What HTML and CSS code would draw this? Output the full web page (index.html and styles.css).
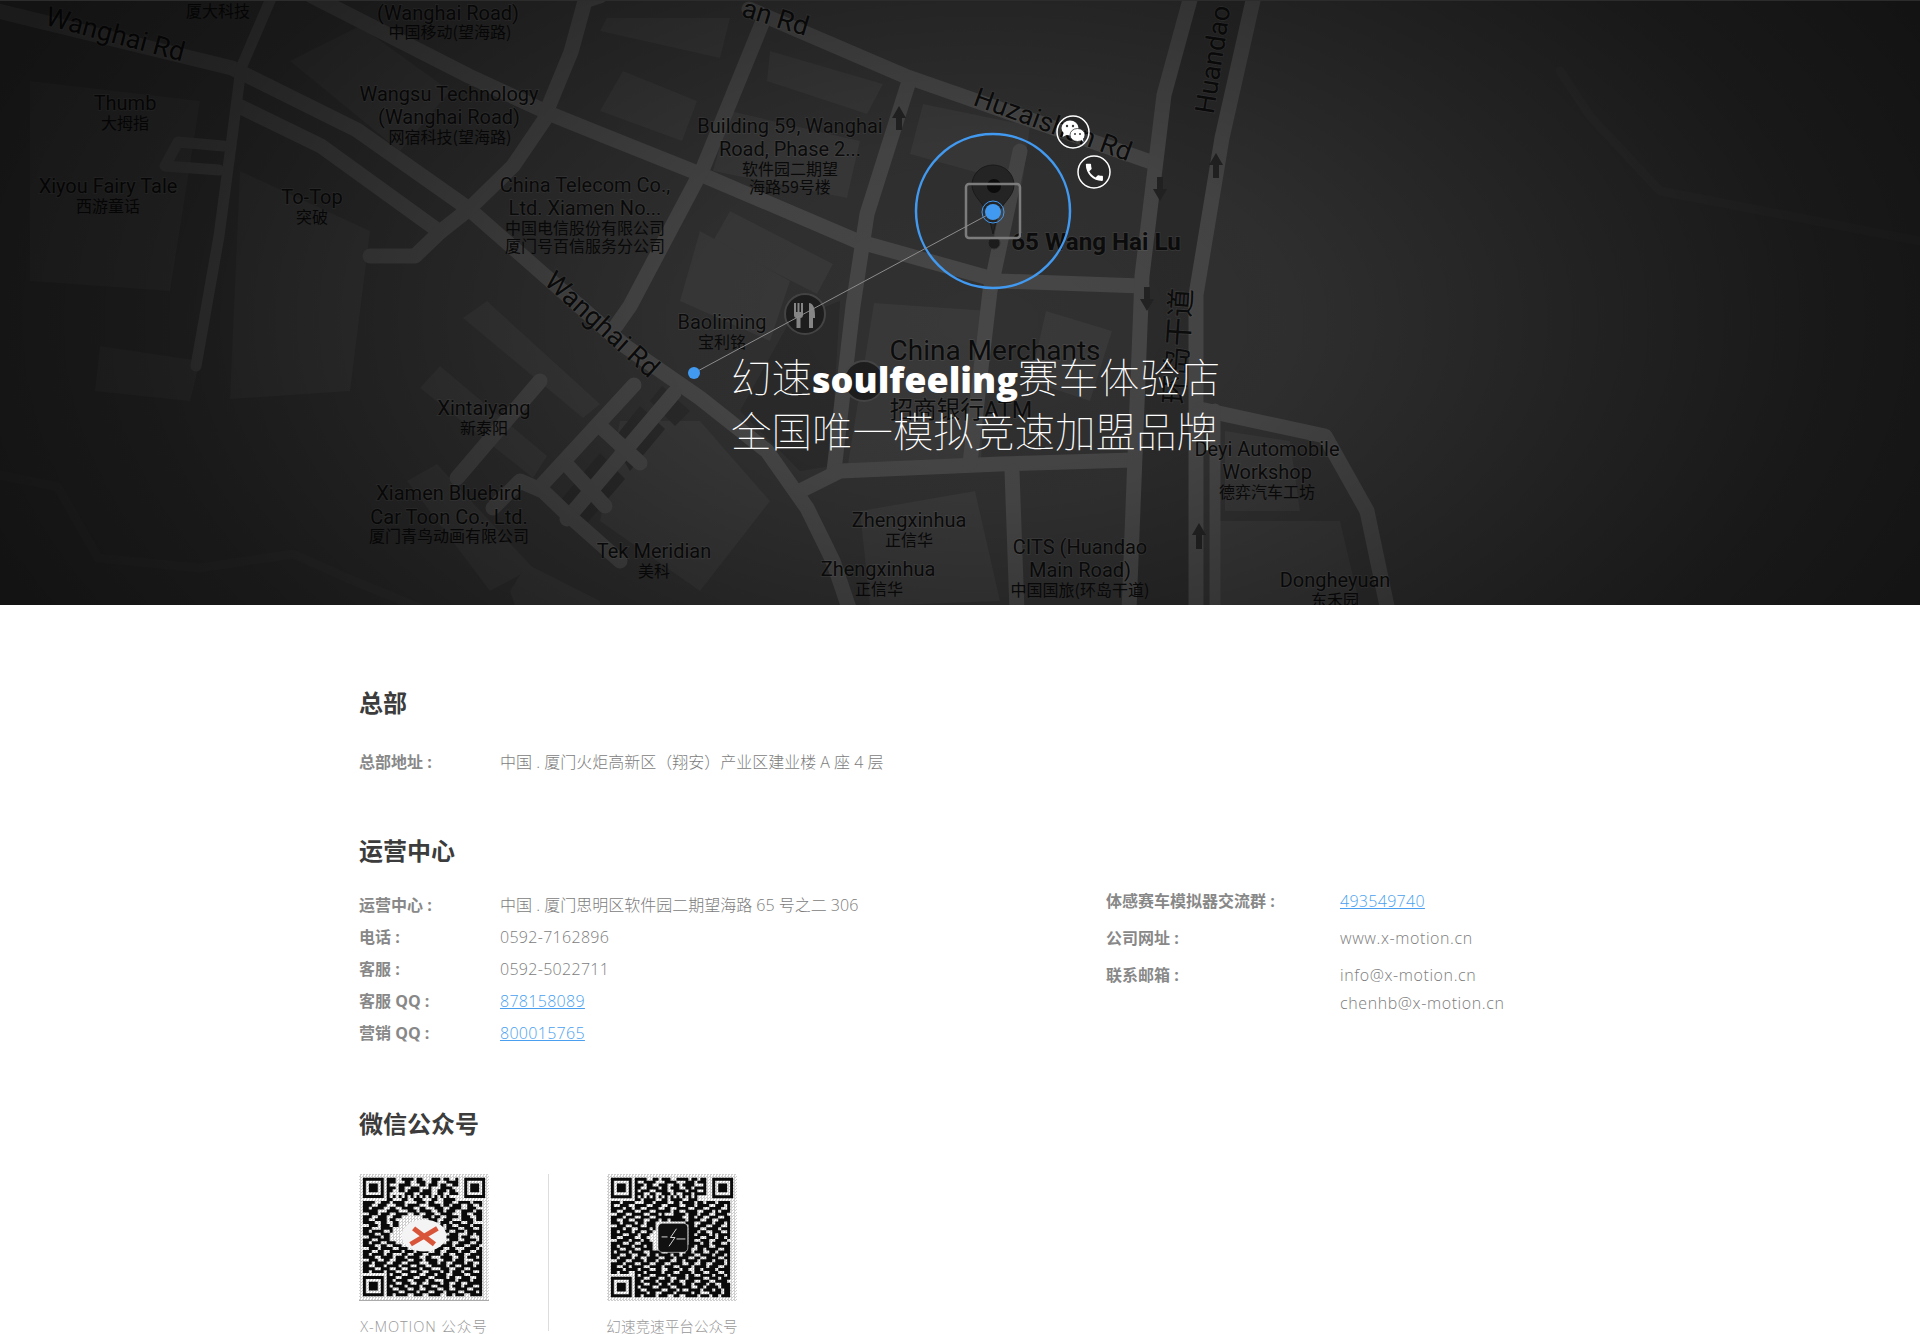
FILE: index.html
```html
<!DOCTYPE html>
<html lang="zh-CN">
<head>
  <meta charset="UTF-8" />
  <meta name="viewport" content="width=device-width, initial-scale=1" />
  <title>联系我们 - X-MOTION</title>
  <link rel="stylesheet" href="styles.css">
</head>
<body>
  <section class="hero">
    <svg class="map" viewBox="0 0 1920 605" width="1920" height="605" aria-hidden="true">
      <rect class="ground" width="1920" height="605"/>

      <!-- blocks -->
      <g class="block">
        <polygon points="770,50 883,83 867,113 767,80"/>
        <polygon points="730,110 860,140 847,197 713,170"/>
        <polygon points="713,240 730,210 833,263 817,293"/>
        <polygon points="623,70 697,100 682,140 600,110"/>
        <polygon points="607,17 730,17 720,57 600,30"/>
        <polygon points="923,103 1030,125 1022,184 910,153"/>
        <polygon points="874,302 990,310 981,459 848,463"/>
        <polygon points="1046,310 1112,330 1090,400 1030,380"/>
        <polygon points="290,60 360,25 450,90 400,150"/>
        <polygon points="463,317 487,300 600,403 583,417"/>
        <polygon points="420,387 440,365 547,455 533,477"/>
        <polygon points="407,480 437,463 533,567 490,590"/>
        <polygon points="510,590 527,563 600,600 600,605 515,605"/>
        <polygon points="620,420 700,420 770,500 700,590 600,520"/>
        <polygon points="860,510 975,490 1000,600 870,605"/>
        <polygon points="1215,520 1340,520 1360,605 1215,605"/>
        <polygon points="1225,430 1290,440 1300,510 1225,510"/>
        <polygon points="240,170 370,230 350,390 230,398"/>
        <polygon points="30,80 200,100 170,290 30,280"/>
        <polygon points="100,345 200,360 190,400 95,390"/>
        <polygon points="700,230 790,280 770,340 680,300"/>
      </g>
      <g class="block-dark">
        <polygon points="650,400 662,385 690,410 675,425"/>
        <polygon points="612,440 640,405 665,428 630,470"/>
        <polygon points="560,500 600,452 625,478 582,528"/>
        <polygon points="790,320 840,300 830,465 800,470 740,410"/>
        <polygon points="1142,0 1191,0 1164,94 1140,280 1128,605 1196,605 1196,294 1222,137 1254,0"/>
      </g>

      <!-- river, very faint -->
      <polyline class="road-faint" points="0,474 58,486 98,557 200,567 293,553 347,577 427,610"/>
      <polyline class="road-faint" points="1560,70 1590,115 1660,190 1920,240"/>

      <!-- roads -->
      <g class="road">
        <polyline points="-10,8 232,67 357,129 469,208 625,345 700,397 767,450 807,507 833,560 850,610"/>
        <polyline points="241,106 321,145 440,231"/>
        <polyline points="545,118 513,165 469,208 440,231 415,255 370,255"/>
        <polyline points="312,-5 469,75 553,114 600,133 700,173 857,240 1000,280 1142,285"/>
        <polyline points="749,8 905,75 1151,161"/>
        <polyline points="600,-5 585,0 571,51 545,114"/>
        <polyline points="763,20 703,167 630,305 616,325"/>
        <polyline points="910,77 867,213 853,305 834,470"/>
        <polyline points="800,490 840,470 1000,463 1133,459"/>
        <polyline points="1012,470 1017,610"/>
        <polyline points="1191,-5 1164,94 1142,275 1129,610"/>
        <polyline points="1254,-5 1222,137 1196,294 1196,610"/>
        <polyline points="1200,408 1325,435 1367,510 1388,610"/>
        <polyline points="634,384 540,486"/>
        <polyline points="674,392 567,518"/>
        <polyline points="600,425 640,462"/>
        <polyline points="568,465 605,505"/>
        <polyline points="493,507 520,480 543,490 567,513 620,560"/>
        <polyline points="540,380 457,477"/>
        <polyline points="1020,150 990,290 970,462"/>
      </g>
      <g class="road-thin">
        <polyline points="272,-5 241,67 232,137 219,235 196,365"/>
        <polyline points="223,145 178,141 165,165 219,169"/>
        <polyline points="1215,408 1215,605"/>
      </g>

      <!-- one way arrows -->
      <g class="arrow">
        <path d="M899 105l7 12h-4v12h-6v-12h-4z"/>
        <path d="M1216 152l7 12h-4v13h-6v-13h-4z"/>
        <path d="M1199 522l7 12h-4v14h-6v-14h-4z"/>
        <path d="M1160 200l7-12h-4v-12h-6v12h-4z"/>
        <path d="M1147 310l7-12h-4v-12h-6v12h-4z"/>
      </g>

      <!-- restaurant and atm pois -->
      <circle class="poi" cx="805" cy="313" r="20"/>
      <path class="poi-mark" d="M794 302h2v9h1.500v-9h2v9h1.500v-9h2v12c0 2-1 3-2.500 3v10h-4v-10c-1.500 0-2.500-1-2.500-3zM809 302c4 0 6 5 6 13v2h-2v10h-4z"/>
      <circle class="poi" cx="864" cy="380" r="20"/>

      <!-- place labels -->
      <g class="lbl">
        <text x="448" y="19">(Wanghai Road)</text>
        <text x="449" y="100">Wangsu Technology</text>
        <text x="449" y="123">(Wanghai Road)</text>
        <text x="125" y="109">Thumb</text>
        <text x="108" y="192">Xiyou Fairy Tale</text>
        <text x="312" y="203">To-Top</text>
        <text x="585" y="191">China Telecom Co.,</text>
        <text x="585" y="214">Ltd. Xiamen No...</text>
        <text x="790" y="132">Building 59, Wanghai</text>
        <text x="790" y="155">Road, Phase 2...</text>
        <text x="722" y="328">Baoliming</text>
        <text x="484" y="414">Xintaiyang</text>
        <text x="449" y="499">Xiamen Bluebird</text>
        <text x="449" y="523">Car Toon Co., Ltd.</text>
        <text x="654" y="557">Tek Meridian</text>
        <text x="909" y="526">Zhengxinhua</text>
        <text x="878" y="575">Zhengxinhua</text>
        <text x="1080" y="553">CITS (Huandao</text>
        <text x="1080" y="576">Main Road)</text>
        <text x="1267" y="455">Deyi Automobile</text>
        <text x="1267" y="478">Workshop</text>
        <text x="1335" y="586">Dongheyuan</text>
      </g>
      <g class="lbl-turn">
        <text transform="translate(113 42) rotate(15)">Wanghai Rd</text>
        <text transform="translate(596 330) rotate(42)">Wanghai Rd</text>
        <text transform="translate(1050 132) rotate(20)">Huzaishan Rd</text>
        <text transform="translate(773 25) rotate(17)">an Rd</text>
        <text transform="translate(1222 60) rotate(-81)">Huandao</text>
      </g>
      <g class="lbl-zh">
        <text x="218" y="16">厦大科技</text>
        <text x="450" y="37">中国移动(望海路)</text>
        <text x="450" y="142">网宿科技(望海路)</text>
        <text x="125" y="128">大拇指</text>
        <text x="108" y="211">西游童话</text>
        <text x="312" y="222">突破</text>
        <text x="585" y="233">中国电信股份有限公司</text>
        <text x="585" y="251">厦门号百信服务分公司</text>
        <text x="790" y="174">软件园二期望</text>
        <text x="790" y="192">海路59号楼</text>
        <text x="722" y="347">宝利铭</text>
        <text x="484" y="433">新泰阳</text>
        <text x="449" y="541">厦门青鸟动画有限公司</text>
        <text x="654" y="576">美科</text>
        <text x="909" y="545">正信华</text>
        <text x="879" y="594">正信华</text>
        <text x="1080" y="595">中国国旅(环岛干道)</text>
        <text x="1267" y="497">德弈汽车工坊</text>
        <text x="1335" y="605">东禾园</text>
      </g>
      <text class="lbl-big" x="995" y="359">China Merchants</text>
      <text class="lbl-atm" x="961" y="417">招商银行ATM</text>
      <text class="lbl-road" transform="translate(1188 346) rotate(-86)">环岛干道</text>
      <text class="lbl-bold" x="1096" y="249">65 Wang Hai Lu</text>
    </svg>
    <div class="vignette"></div>

    <svg class="marker" viewBox="0 0 1920 605" width="1920" height="605" aria-hidden="true">
      <path class="pin" d="M993 164c-12 0-21 9-21 20 0 12 13 18 17 32l4 17 4-17c4-14 17-20 17-32 0-11-9-20-21-20z"/>
      <circle class="pin-hole" cx="994" cy="185" r="7"/>
      <circle class="pin-foot" cx="994" cy="242" r="6"/>
      <rect class="pin-box" x="966" y="183" width="54" height="54" rx="3"/>
      <circle class="ring" cx="993" cy="210" r="77"/>
      <line class="lead" x1="993" y1="211" x2="694" y2="372"/>
      <circle class="dot" cx="993" cy="211" r="8"/>
      <circle class="dot-ring" cx="993" cy="211" r="11"/>
      <circle class="dot" cx="694" cy="372" r="6"/>

      <circle class="icon-ring" cx="1073" cy="131" r="16"/>
      <g class="icon-wx">
        <ellipse cx="1070" cy="127" rx="8.500" ry="7.500"/>
        <path d="M1064 131l-1.500 5 5-2.500z"/>
        <ellipse class="wx-back" cx="1077.500" cy="134" rx="7.500" ry="6.500"/>
        <path d="M1081 138l2.500 3.500-.5-5z"/>
      </g>
      <g class="wx-eyes">
        <circle cx="1067" cy="125" r="1.200"/>
        <circle cx="1073" cy="125" r="1.200"/>
        <circle cx="1075" cy="133" r="1"/>
        <circle cx="1080" cy="133" r="1"/>
      </g>
      <circle class="icon-ring" cx="1094" cy="171" r="16"/>
      <path class="icon-phone" transform="translate(1083 160) scale(.95)" d="M6.620 10.790c1.440 2.830 3.760 5.140 6.590 6.590l2.200-2.200c.27-.27.67-.36 1.020-.24 1.120.37 2.330.57 3.570.57.55 0 1 .45 1 1V20c0 .55-.45 1-1 1-9.390 0-17-7.610-17-17 0-.55.45-1 1-1h3.500c.55 0 1 .45 1 1 0 1.250.2 2.450.57 3.570.11.35.03.74-.25 1.020l-2.200 2.200z"/>
    </svg>

    <h1 class="hero-title">幻速<b>soulfeeling</b>赛车体验店<br>全国唯一模拟竞速加盟品牌</h1>
  </section>

  <main class="content">
    <h2>总部</h2>
    <dl class="info info-hq">
      <div><dt>总部地址 :</dt><dd>中国 . 厦门火炬高新区（翔安）产业区建业楼 A 座 4 层</dd></div>
    </dl>

    <h2>运营中心</h2>
    <div class="contact-cols">
      <dl class="info">
        <div><dt>运营中心 :</dt><dd>中国 . 厦门思明区软件园二期望海路 65 号之二 306</dd></div>
        <div><dt>电话 :</dt><dd class="latin">0592-7162896</dd></div>
        <div><dt>客服 :</dt><dd class="latin">0592-5022711</dd></div>
        <div><dt>客服 QQ :</dt><dd class="latin"><a href="#">878158089</a></dd></div>
        <div><dt>营销 QQ :</dt><dd class="latin"><a href="#">800015765</a></dd></div>
      </dl>
      <dl class="info info-side">
        <div><dt>体感赛车模拟器交流群 :</dt><dd class="latin"><a href="#">493549740</a></dd></div>
        <div><dt>公司网址 :</dt><dd class="latin latin-wide">www.x-motion.cn</dd></div>
        <div><dt>联系邮箱 :</dt><dd class="latin latin-wide">info@x-motion.cn<br>chenhb@x-motion.cn</dd></div>
      </dl>
    </div>

    <h2>微信公众号</h2>
    <div class="qr-list">
      <figure class="qr-item">
        <svg class="qr qr-first" id="qrXmotion" viewBox="-1.300 -1.300 43.600 43.600" preserveAspectRatio="none" aria-hidden="true"></svg>
        <figcaption class="cap-latin">X-MOTION 公众号</figcaption>
      </figure>
      <figure class="qr-item">
        <svg class="qr" id="qrSoul" viewBox="-1.300 -1.300 43.600 43.600" preserveAspectRatio="none" aria-hidden="true"></svg>
        <figcaption>幻速竞速平台公众号</figcaption>
      </figure>
    </div>
  </main>

  <script src="qr.js"></script>
</body>
</html>
```

FILE: styles.css
```css
* {
  margin: 0;
  padding: 0;
  box-sizing: border-box;
}

html, body {
  height: 100%;
  overflow: hidden;
  background: #fff;
  font-family: "Open Sans", "Noto Sans CJK SC", sans-serif;
  color: #888;
}

.hero {
  position: relative;
  height: 605px;
  overflow: hidden;
  background: #141414;
  border-top: 1px solid #2c2c2c;
}

.map, .marker {
  position: absolute;
  top: 0;
  left: 0;
  display: block;
}

.ground { fill: #313131; }
.block polygon { fill: #393939; }
.block-dark polygon { fill: #2b2b2b; }

.road polyline, .road-thin polyline, .road-faint {
  fill: none;
  stroke-linejoin: round;
  stroke-linecap: round;
}

.road polyline { stroke: #474747; stroke-width: 15px; }
.road-thin polyline { stroke: #474747; stroke-width: 11px; }
.road-faint { stroke: #353535; stroke-width: 9px; }

.arrow path { fill: #232323; }

.poi { fill: #1e1e1e; stroke: #464646; stroke-width: 2px; }
.poi-mark { fill: #8a8a8a; }

.map text {
  text-anchor: middle;
  fill: #0c0c0c;
  paint-order: stroke;
  stroke: rgba(255, 255, 255, 0.06);
  stroke-width: 2px;
}

.lbl text {
  font-family: Roboto, sans-serif;
  font-size: 20px;
}

.lbl-turn text {
  font-family: Roboto, sans-serif;
  font-size: 27px;
}

.map .lbl-zh text {
  font-family: "Noto Sans CJK SC", sans-serif;
  font-size: 16px;
  fill: #0a0a0a;
  stroke: none;
}

.lbl-big {
  font-family: Roboto, sans-serif;
  font-size: 28px;
}

.lbl-atm {
  font-family: Roboto, "Noto Sans CJK SC", sans-serif;
  font-size: 23.500px;
}

.lbl-road {
  font-family: "Noto Sans CJK SC", sans-serif;
  font-size: 29px;
}

.lbl-bold {
  font-family: Roboto, sans-serif;
  font-size: 24.200px;
  font-weight: 700;
}

.vignette {
  position: absolute;
  inset: 0;
  background: radial-gradient(ellipse 1080px 640px at 985px 320px,
    rgba(0, 0, 0, 0) 0%,
    rgba(0, 0, 0, 0.06) 28%,
    rgba(0, 0, 0, 0.3) 55%,
    rgba(0, 0, 0, 0.5) 78%,
    rgba(0, 0, 0, 0.62) 100%);
}

.pin { fill: #242424; stroke: #1a1a1a; }
.pin-hole { fill: #0c0c0c; }
.pin-foot { fill: #1c1c1c; stroke: #333; }
.pin-box { fill: none; stroke: #7c7c7c; stroke-width: 2.500px; }
.ring { fill: none; stroke: #4299f0; stroke-width: 2.500px; }
.lead { stroke: #8c8c8c; stroke-width: 1px; }
.dot { fill: #4299f0; }
.dot-ring { fill: none; stroke: #4299f0; stroke-width: 1px; }
.icon-ring { fill: rgba(0, 0, 0, 0.12); stroke: #fff; stroke-width: 1.500px; }
.icon-wx { fill: #fff; }
.wx-back { stroke: #333; stroke-width: 0.800px; }
.wx-eyes circle { fill: #3a3a3a; }
.icon-phone { fill: #fff; }

.hero-title {
  position: absolute;
  left: 731px;
  top: 348px;
  font-family: "Noto Sans CJK SC", sans-serif;
  font-size: 40.500px;
  font-weight: 100;
  line-height: 54px;
  color: #fff;
  white-space: nowrap;
}

.hero-title b {
  font-family: "Open Sans", sans-serif;
  font-weight: 800;
  font-size: 36px;
  line-height: 0;
}

.content {
  width: 1202px;
  margin: 0 auto;
  padding-top: 82px;
}

h2 {
  font-family: "Noto Sans CJK SC", sans-serif;
  font-size: 24px;
  font-weight: 700;
  line-height: 30px;
  color: #3c3c3c;
}

.info {
  margin-top: 24px;
  font-size: 16px;
  line-height: 32px;
}

.info-hq {
  margin-top: 29px;
  margin-bottom: 57px;
}

.info > div {
  display: flex;
}

.info dt {
  width: 141px;
  flex: none;
  font-weight: 700;
  color: #888;
}

.info dd {
  font-weight: 300;
  color: #7c7c7c;
}

.info .latin {
  letter-spacing: 0.3px;
}

.info .latin-wide {
  letter-spacing: 0.6px;
}

.info a {
  color: #4a9ff0;
}

.contact-cols {
  display: grid;
  grid-template-columns: 747px 1fr;
  margin-bottom: 59px;
}

.info-side {
  margin-top: 22px;
  line-height: 28px;
}

.info-side > div {
  margin-bottom: 9px;
}

.info-side dt {
  width: 234px;
}

.qr-list {
  display: flex;
  margin-top: 36px;
}

.qr-item {
  width: 130px;
  text-align: center;
}

.qr-item:first-child {
  width: 190px;
  padding-right: 59px;
  margin-right: 58px;
  border-right: 1px solid #ddd;
  height: 157px;
}

.qr {
  display: block;
  width: 130px;
  height: 127px;
  background: repeating-conic-gradient(#cfcfcf 0 25%, #fff 0 50%) 0 0 / 3px 3px;
}

.qr-first {
  border-bottom: 1px solid #aaa;
}

.qr-dark { fill: #0a0a0a; }
.qr-gap { fill: #f4f4f4; }
.qr-logo-x { fill: none; stroke: #d9553a; stroke-width: 1.700px; }
.qr-logo-box { fill: #111; stroke: #eee; stroke-width: 0.200px; }
.qr-logo-bolt { fill: none; stroke: #eee; stroke-width: 0.300px; }

figcaption {
  margin-top: 13px;
  margin-left: -2px;
  margin-right: -2px;
  font-size: 14.600px;
  line-height: 24px;
  font-weight: 300;
  color: #999;
  white-space: nowrap;
}

.cap-latin {
  letter-spacing: 0.9px;
  margin-left: -8px;
  margin-right: -8px;
}
```

FILE: qr.js
```js
// qr modules, rows of 41. finder squares are added below
const xmotionRows = [
  "........###..####.##...###.##..#........",
  "........###...##..###..##...####........",
  "........#...####...##.###.##..##........",
  "........###.##..###...#...####..........",
  "........##..##.####.###..###.##.........",
  "........#.....###..####..##..###........",
  "........#.#.#.#.#.#.#.#.#.#.#...........",
  "........##...##..###...##..####.........",
  "####..###.####....###.##...###..####.###",
  "###..###...###.####...####.##.###..##..#",
  "##.####..##..####..##...###..####..###..",
  "#####...####...###.####..##.###..####.##",
  "..###.###..####..##..###..####...##..###",
  "###..###..###.......###.##..####.###..##",
  "##..####.##...........###..###...####.##",
  "####..##..##...........##.###.###..##...",
  "..###.###.##............###.##..####.###",
  "###...####..............##..####..###..#",
  "##.####..#...............####..###.#####",
  "####..###................##..###...##.##",
  "..####.##...............###.####.###...#",
  "###..####...............##...###..####.#",
  "##.###..###............####.##..####..##",
  "####..##..###.........##..####.###..###.",
  "..###.####..###.....###.###..##...####.#",
  "###..##..####.###.####..##..####.###..##",
  "##.####.##...##..###..####.##..###..####",
  "####..####.###.####..##...####..##.###.#",
  "..###..##..####..###.####..###.###...###",
  "###.####..###..####...###.##..####.##..#",
  "##..###.####.###..###..#####.##..####.##",
  "####..###..##..####.###...###..###..####",
  "##.####.###..###..##..####.##.###.###..#",
  "........#.###..####..###.###..####..####",
  "........###..####..###..####.##..###..##",
  "........##.####..####.##...####.####.###",
  "........###..###..##..####.##..##..#####",
  "........#.####.####.###..####.###.###..#",
  "........##..###..##..####..##..####..###",
  "........####..####.###..###.####..####.#",
  "........##.####..###..####..##.###..####"
];

const soulRows = [
  "........####..##.###..####.##.##........",
  "........#..####...####...###.###........",
  "........###.##..###..##.####...#........",
  "........##..####.##.###..##.####........",
  "........#.###..####..####.###..#........",
  "........###..##..###.#..###.####........",
  "........#.#.#.#.#.#.#.#.#.#.#...........",
  "........##.####..##.####..###...........",
  "###.####...###.####..##.####.##.###.####",
  "#..###..####..###..####..###.####..###.#",
  "####.##.##..####..##..####..###..####..#",
  "##..####..###..#####.##..####..###.#.###",
  "..###..####..###.#...####.###.###..####.",
  "####.###..###..#########..##.##..###..##",
  "##..##..###..###.##.#####.####..##..####",
  "###.####.##.###..........###..####.###.#",
  "..###..###..###...........##.###..###..#",
  "####.##..####.#...........####..####.###",
  "##.####.##..##............###.##..###..#",
  "####..###.###.............##.####.#.####",
  "##..####..##..............####..###.##.#",
  "..####.###.##.............##..###..####.",
  "####..##..####............####.##.###..#",
  "##.####.###.##...........###.####..#####",
  "###..###..####..##.##.#####..##.####..##",
  "#.####.####..####..####..##.###..##.####",
  "###..##..###.##.####.##.####..####.###.#",
  "##.####.##..####..###.####..##..####..##",
  "..###..####.###.####..##.####.####.###.#",
  "####.###..###..###..####..##..##..####.#",
  "##..##.####..####.###..####.####.###..##",
  "####.####.###..##..####.##..##.####.####",
  "##.###..###.#####.###..####.###..###..##",
  "........#.###..####.#####.##..####.###.#",
  "........###..###..##..###.#####..###.###",
  "........##.####.####.##..###..###..####.",
  "........###..###.##.####.##.####.##..###",
  "........#.####..####..#####..##.####.###",
  "........##..#####..###.#..####.###.##.##",
  "........####.##..####.#####.##...####.##",
  "........##.####.###..##..####.###.##.###"
];

function moduleRect(x, y, w, h) {
  return `M${x} ${y}h${w}v${h}h${-w}z`;
}

function finder(x, y) {
  return moduleRect(x, y, 7, 1) + moduleRect(x, y + 6, 7, 1) +
    moduleRect(x, y + 1, 1, 5) + moduleRect(x + 6, y + 1, 1, 5) +
    moduleRect(x + 2, y + 2, 3, 3);
}

function drawQr(id, rows, logo) {
  let d = finder(0, 0) + finder(34, 0) + finder(0, 34);
  rows.forEach((row, y) => {
    [...row.slice(0, 41)].forEach((cell, x) => {
      if (cell === "#") d += moduleRect(x, y, 1, 1);
    });
  });
  document.getElementById(id).innerHTML = `<path class="qr-dark" d="${d}"/>${logo}`;
}

drawQr("qrXmotion", xmotionRows,
  '<ellipse class="qr-gap" cx="20.500" cy="20" rx="7.500" ry="5.500"/>' +
  '<path class="qr-logo-x" d="M17 17.500l7 5.500M25 17.500l-9 5.500"/>');

drawQr("qrSoul", soulRows,
  '<rect class="qr-logo-box" x="15.800" y="15.600" width="10" height="10" rx="1.500"/>' +
  '<path class="qr-logo-bolt" d="M22 17.500l-2 3h1.500l-2 3M17 20.300h2M22 21h3"/>');
```
